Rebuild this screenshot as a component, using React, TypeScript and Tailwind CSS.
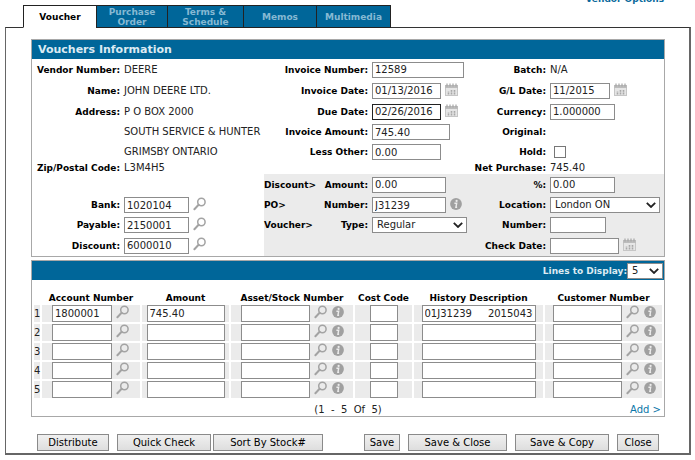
import { useState } from 'react';
import type { ReactNode } from 'react';
import clsx from 'clsx';

const TABS = ['Voucher', 'Purchase Order', 'Terms & Schedule', 'Memos', 'Multimedia'];
const TAB_WIDTHS = ['w-[74px]', 'w-[72px]', 'w-[77px]', 'w-[74px]', 'w-[75px]'];

const LINES = [
  { account: '1800001', amount: '745.40', history: '01J31239     20150430' },
  { account: '', amount: '', history: '' },
  { account: '', amount: '', history: '' },
  { account: '', amount: '', history: '' },
  { account: '', amount: '', history: '' },
];

const SearchIcon = () => (
  <svg width="14" height="14" viewBox="0 0 14 14" fill="none" stroke="#a3a3a3" aria-hidden="true">
    <circle cx="8.4" cy="5" r="3.7" strokeWidth="1.5" />
    <path d="M5.6 7.8 1.4 12.2" strokeWidth="2" strokeLinecap="round" />
  </svg>
);

const InfoIcon = () => (
  <svg width="12" height="12" viewBox="0 0 12 12" aria-hidden="true">
    <circle cx="6" cy="6" r="5.9" fill="#a0a0a0" />
    <circle cx="6.6" cy="2.9" r="1.1" fill="#ececec" />
    <path d="M4.4 5.2h2.3l-.8 4h1.2" fill="none" stroke="#ececec" strokeWidth="1.4" />
  </svg>
);

const CalendarIcon = () => (
  <svg width="13" height="13" viewBox="0 0 13 13" aria-hidden="true">
    <rect x="0.5" y="2.5" width="12" height="10" fill="#e6e6e6" stroke="#c6c6c6" />
    <rect x="0" y="2" width="13" height="3" fill="#bcbcbc" />
    <path d="M2 .5v3M5 .5v3M8 .5v3M11 .5v3" stroke="#a6a6a6" strokeWidth="1.2" />
    <path d="M3.5 8.5v3M6.5 7v4.5M9.5 7v4.5" stroke="#a8a8a8" strokeWidth="1.6" />
    <path d="M1 9.2h11" stroke="#e6e6e6" strokeWidth=".6" />
  </svg>
);

interface IconButtonProps {
  label: string;
  children: ReactNode;
}

const IconButton = ({ label, children }: IconButtonProps) => (
  <button type="button" aria-label={label} className="mb-[3px] shrink-0 cursor-pointer">
    {children}
  </button>
);

interface FieldProps {
  id: string;
  value?: string;
  width: string;
  focused?: boolean;
}

const Field = ({ id, value = '', width, focused }: FieldProps) => (
  <input
    id={id}
    type="text"
    defaultValue={value}
    className={clsx(
      'h-4 shrink-0 border bg-white px-[2px] text-[10px] text-[#222] outline-none',
      focused ? 'border-[#222]' : 'border-[#8c8c8c]',
      width
    )}
  />
);

interface SelectFieldProps {
  id: string;
  options: string[];
  width: string;
}

const SelectField = ({ id, options, width }: SelectFieldProps) => (
  <div className={clsx('relative', width)}>
    <select
      id={id}
      className="block h-4 w-full appearance-none border border-[#8c8c8c] bg-white px-1 text-[10px] text-[#222] outline-none"
    >
      {options.map((option) => (
        <option key={option}>{option}</option>
      ))}
    </select>
    <svg
      width="10"
      height="6"
      viewBox="0 0 10 6"
      className="pointer-events-none absolute top-[5px] right-1"
      fill="none"
      stroke="#222"
      strokeWidth="1.8"
      aria-hidden="true"
    >
      <path d="M.8 .8 5 5 9.2 .8" />
    </svg>
  </div>
);

interface CellProps {
  label?: string;
  prefix?: string;
  htmlFor?: string;
  shaded?: boolean;
  children?: ReactNode;
}

// label cell + value cell of the header grid
const Cell = ({ label, prefix, htmlFor, shaded, children }: CellProps) => (
  <>
    <div
      className={clsx(
        'flex items-center pr-1 text-[9px] font-bold whitespace-nowrap text-black',
        prefix ? 'justify-between' : 'justify-end',
        shaded && 'bg-[#ebebeb]'
      )}
    >
      {prefix && <span>{prefix}</span>}
      {label && (htmlFor ? <label htmlFor={htmlFor}>{label}</label> : <span>{label}</span>)}
    </div>
    <div className={clsx('flex items-center gap-1 whitespace-nowrap', shaded && 'bg-[#ebebeb]')}>{children}</div>
  </>
);

const VoucherHeader = () => (
  <section className="border border-[#a8a8a8]">
    <h1 className="bg-[#006699] px-1.5 text-[11px] leading-[19px] font-bold text-[#dcebf3]">Vouchers Information</h1>
    <div className="grid grid-cols-[92px_minmax(0,1fr)_108px_102px_76px_114px] grid-rows-[21px_21px_21px_20px_20px_12px_21px_20px_20px_21px]">
      <Cell label="Vendor Number:">DEERE</Cell>
      <Cell label="Invoice Number:" htmlFor="invoiceNumber">
        <Field id="invoiceNumber" value="12589" width="w-[92px]" />
      </Cell>
      <Cell label="Batch:">N/A</Cell>

      <Cell label="Name:">JOHN DEERE LTD.</Cell>
      <Cell label="Invoice Date:" htmlFor="invoiceDate">
        <Field id="invoiceDate" value="01/13/2016" width="w-[69px]" />
        <IconButton label="Pick invoice date"><CalendarIcon /></IconButton>
      </Cell>
      <Cell label="G/L Date:" htmlFor="glDate">
        <Field id="glDate" value="11/2015" width="w-[60px]" />
        <IconButton label="Pick G/L date"><CalendarIcon /></IconButton>
      </Cell>

      <Cell label="Address:">P O BOX 2000</Cell>
      <Cell label="Due Date:" htmlFor="dueDate">
        <Field id="dueDate" value="02/26/2016" width="w-[69px]" focused />
        <IconButton label="Pick due date"><CalendarIcon /></IconButton>
      </Cell>
      <Cell label="Currency:" htmlFor="currency">
        <Field id="currency" value="1.000000" width="w-[65px]" />
      </Cell>

      <Cell>SOUTH SERVICE &amp; HUNTER</Cell>
      <Cell label="Invoice Amount:" htmlFor="invoiceAmount">
        <Field id="invoiceAmount" value="745.40" width="w-[78px]" />
      </Cell>
      <Cell label="Original:" />

      <Cell>GRIMSBY ONTARIO</Cell>
      <Cell label="Less Other:" htmlFor="lessOther">
        <Field id="lessOther" value="0.00" width="w-[69px]" />
      </Cell>
      <Cell label="Hold:" htmlFor="hold">
        <input id="hold" type="checkbox" className="ml-1 size-3 appearance-none border border-[#777] bg-white checked:bg-[#006699]" />
      </Cell>

      <Cell label="Zip/Postal Code:">L3M4H5</Cell>
      <Cell />
      <Cell label="Net Purchase:">745.40</Cell>

      <Cell />
      <Cell prefix="Discount>" label="Amount:" htmlFor="discountAmount" shaded>
        <Field id="discountAmount" value="0.00" width="w-[74px]" />
      </Cell>
      <Cell label="%:" htmlFor="discountPercent" shaded>
        <Field id="discountPercent" value="0.00" width="w-[65px]" />
      </Cell>

      <Cell label="Bank:" htmlFor="bank">
        <Field id="bank" value="1020104" width="w-[65px]" />
        <IconButton label="Find bank"><SearchIcon /></IconButton>
      </Cell>
      <Cell prefix="PO>" label="Number:" htmlFor="poNumber" shaded>
        <Field id="poNumber" value="J31239" width="w-[74px]" />
        <IconButton label="PO details"><InfoIcon /></IconButton>
      </Cell>
      <Cell label="Location:" htmlFor="location" shaded>
        <SelectField id="location" options={['London ON']} width="w-[110px]" />
      </Cell>

      <Cell label="Payable:" htmlFor="payable">
        <Field id="payable" value="2150001" width="w-[65px]" />
        <IconButton label="Find payable"><SearchIcon /></IconButton>
      </Cell>
      <Cell prefix="Voucher>" label="Type:" htmlFor="voucherType" shaded>
        <SelectField id="voucherType" options={['Regular']} width="w-[95px]" />
      </Cell>
      <Cell label="Number:" htmlFor="voucherNumber" shaded>
        <Field id="voucherNumber" width="w-[56px]" />
      </Cell>

      <Cell label="Discount:" htmlFor="discount">
        <Field id="discount" value="6000010" width="w-[65px]" />
        <IconButton label="Find discount"><SearchIcon /></IconButton>
      </Cell>
      <Cell shaded />
      <Cell label="Check Date:" htmlFor="checkDate" shaded>
        <Field id="checkDate" width="w-[69px]" />
        <IconButton label="Pick check date"><CalendarIcon /></IconButton>
      </Cell>
    </div>
  </section>
);

interface LineInputProps {
  label: string;
  value?: string;
  width: string;
}

const LineInput = ({ label, value = '', width }: LineInputProps) => (
  <input
    type="text"
    aria-label={label}
    defaultValue={value}
    className={clsx('h-[17px] shrink-0 border border-[#8c8c8c] bg-white px-[2px] text-[10px] text-[#222] outline-none', width)}
  />
);

const LineTable = () => (
  <section className="mt-[3px] border border-[#a8a8a8]">
    <div className="flex h-[19px] items-center justify-end bg-[#006699] pr-px">
      <label htmlFor="linesToDisplay" className="text-[9px] font-bold text-[#dcebf3]">Lines to Display:</label>
      <SelectField id="linesToDisplay" options={['5', '10', '20']} width="w-9" />
    </div>
    <table className="mt-[11px] w-full table-fixed border-separate border-spacing-[2px]">
      <colgroup>
        <col className="w-[6px]" />
        <col className="w-[98px]" />
        <col className="w-[87px]" />
        <col className="w-[122px]" />
        <col className="w-[57px]" />
        <col />
        <col className="w-[117px]" />
      </colgroup>
      <thead>
        <tr className="text-[9px] leading-[10px] whitespace-nowrap text-black">
          <th className="p-0" />
          <th className="p-0">Account Number</th>
          <th className="p-0">Amount</th>
          <th className="p-0">Asset/Stock Number</th>
          <th className="p-0">Cost Code</th>
          <th className="p-0">History Description</th>
          <th className="p-0">Customer Number</th>
        </tr>
      </thead>
      <tbody>
        {LINES.map((line, index) => (
          <tr key={index} className="h-[17px] *:bg-[#ebebeb] *:p-0">
            <td className="text-center">{index + 1}</td>
            <td>
              <div className="flex items-center gap-1 pl-2.5">
                <LineInput label={`Account number ${index + 1}`} value={line.account} width="w-[60px]" />
                <IconButton label="Find account"><SearchIcon /></IconButton>
              </div>
            </td>
            <td>
              <div className="flex justify-center">
                <LineInput label={`Amount ${index + 1}`} value={line.amount} width="w-[78px]" />
              </div>
            </td>
            <td>
              <div className="flex items-center gap-1 pl-2.5">
                <LineInput label={`Asset or stock number ${index + 1}`} width="w-[69px]" />
                <IconButton label="Find asset"><SearchIcon /></IconButton>
                <IconButton label="Asset details"><InfoIcon /></IconButton>
              </div>
            </td>
            <td>
              <div className="flex justify-center">
                <LineInput label={`Cost code ${index + 1}`} width="w-7" />
              </div>
            </td>
            <td>
              <div className="flex justify-center">
                <LineInput label={`History description ${index + 1}`} value={line.history} width="w-[114px]" />
              </div>
            </td>
            <td>
              <div className="flex items-center gap-1 pl-2">
                <LineInput label={`Customer number ${index + 1}`} width="w-[69px]" />
                <IconButton label="Find customer"><SearchIcon /></IconButton>
                <IconButton label="Customer details"><InfoIcon /></IconButton>
              </div>
            </td>
          </tr>
        ))}
      </tbody>
    </table>
    <div className="grid h-4 grid-cols-[1fr_auto_1fr] items-end px-[3px]">
      <span className="col-start-2 whitespace-pre">(1  -  5  Of  5)</span>
      <a href="#add" className="justify-self-end text-[#0b76a8]">Add &gt;</a>
    </div>
  </section>
);

interface ActionButtonProps {
  label: string;
  width: string;
}

const ActionButton = ({ label, width }: ActionButtonProps) => (
  <button
    type="button"
    className={clsx('h-[17px] border border-[#8a8a8a] bg-linear-to-b from-[#f0f0f0] to-[#dedede] text-[10px] leading-[15px] whitespace-nowrap text-black', width)}
  >
    {label}
  </button>
);

const App = () => {
  const [activeTab, setActiveTab] = useState('Voucher');

  return (
    <div className="bg-white pr-1 pl-[5px] font-['Verdana','DejaVu_Sans',sans-serif] text-[10px] leading-3 text-[#222]">
      <div className="flex h-[5px] items-end justify-end overflow-hidden pr-[27px]">
        <a href="#vendor-options" className="text-[9px] font-bold text-[#0b6a9c]">Vendor Options</a>
      </div>

      <nav className="relative -mb-px flex h-[23px] pl-[18px]">
        {TABS.map((tab, index) => (
          <button
            key={tab}
            type="button"
            onClick={() => setActiveTab(tab)}
            className={clsx(
              '-mr-px border border-[#222] px-1.5 text-center text-[9px] leading-[10px] font-bold',
              TAB_WIDTHS[index],
              activeTab === tab ? 'border-b-white bg-white text-black' : 'bg-[#006699] text-[#86b9d3]'
            )}
          >
            {tab}
          </button>
        ))}
      </nav>

      <main className="border border-r-2 border-b-2 border-[#666] border-t-[#333] pt-[11px] pr-6 pb-[2px] pl-[25px]">
        <VoucherHeader />
        <LineTable />
        <div className="mt-[17px] flex justify-between px-1.5">
          <div className="flex gap-[2px]">
            <ActionButton label="Distribute" width="mr-1.5 w-[72px]" />
            <ActionButton label="Quick Check" width="w-[94px]" />
            <ActionButton label="Sort By Stock#" width="w-[110px]" />
          </div>
          <div className="flex gap-2">
            <ActionButton label="Save" width="w-9" />
            <ActionButton label="Save & Close" width="w-[99px]" />
            <ActionButton label="Save & Copy" width="w-[94px]" />
            <ActionButton label="Close" width="w-[42px]" />
          </div>
        </div>
      </main>
    </div>
  );
};

export default App;
